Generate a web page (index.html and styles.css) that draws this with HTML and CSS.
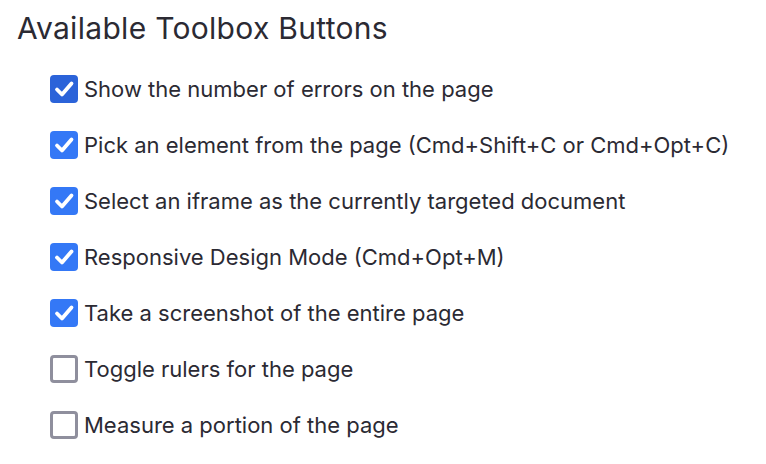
FILE: index.html
```html
<!DOCTYPE html>
<html>
<head>
<meta charset="utf-8">
<link rel="stylesheet" href="styles.css">
</head>
<body>
<main class="panel">
  <h1 class="title">Available Toolbox Buttons</h1>
  <ul class="options">
    <li class="option"><span class="box checked focus"><svg viewBox="0 0 28 28"><path d="M7 14.5 L12 19.5 L21.5 8.5" /></svg></span><span class="label">Show the number of errors on the page</span></li>
    <li class="option"><span class="box checked"><svg viewBox="0 0 28 28"><path d="M7 14.5 L12 19.5 L21.5 8.5" /></svg></span><span class="label">Pick an element from the page (Cmd+Shift+C or Cmd+Opt+C)</span></li>
    <li class="option"><span class="box checked"><svg viewBox="0 0 28 28"><path d="M7 14.5 L12 19.5 L21.5 8.5" /></svg></span><span class="label">Select an iframe as the currently targeted document</span></li>
    <li class="option"><span class="box checked"><svg viewBox="0 0 28 28"><path d="M7 14.5 L12 19.5 L21.5 8.5" /></svg></span><span class="label">Responsive Design Mode (Cmd+Opt+M)</span></li>
    <li class="option"><span class="box checked"><svg viewBox="0 0 28 28"><path d="M7 14.5 L12 19.5 L21.5 8.5" /></svg></span><span class="label">Take a screenshot of the entire page</span></li>
    <li class="option"><span class="box"></span><span class="label">Toggle rulers for the page</span></li>
    <li class="option"><span class="box"></span><span class="label">Measure a portion of the page</span></li>
  </ul>
</main>
</body>
</html>
```
FILE: styles.css
```css
html, body {
  margin: 0;
  padding: 0;
  background: #ffffff;
}
body {
  font-family: Inter, "Noto Sans", "Liberation Sans", sans-serif;
  color: #2b2a33;
}
.panel {
  padding: 10px 0 0 17px;
}
.title {
  margin: 0;
  font-size: 30px;
  font-weight: 400;
  line-height: 36px;
  letter-spacing: 0.3px;
}
.options {
  list-style: none;
  margin: 29px 0 0 0;
  padding: 0 0 0 33px;
  display: flex;
  flex-direction: column;
  gap: 28px;
}
.option {
  display: flex;
  align-items: center;
  gap: 6px;
  height: 28px;
}
.box {
  box-sizing: border-box;
  width: 28px;
  height: 28px;
  border: 3px solid #8f8f9d;
  border-radius: 4px;
  flex: none;
  display: flex;
  align-items: center;
  justify-content: center;
}
.box.checked {
  border: none;
  background: #3478f6;
}
.box.checked.focus {
  background: #2b63d9;
}
.box svg {
  width: 28px;
  height: 28px;
}
.box svg path {
  fill: none;
  stroke: #ffffff;
  stroke-width: 3.8;
  stroke-linecap: round;
  stroke-linejoin: round;
}
.label {
  font-size: 22px;
  line-height: 28px;
  white-space: nowrap;
}
```
